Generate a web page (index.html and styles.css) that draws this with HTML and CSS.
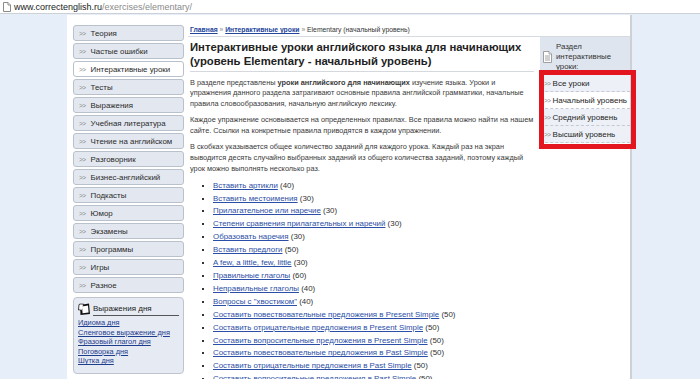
FILE: index.html
```html
<!DOCTYPE html>
<html lang="ru">
<head>
  <meta charset="UTF-8">
  <title>Elementary (начальный уровень)</title>
  <link rel="stylesheet" href="styles.css">
</head>
<body>
  <div class="addressbar">
    <svg class="page-icon" viewBox="0 0 8 10">
      <path d="M0.5 0.5h4.5l2.5 2.5v6.5h-7z"></path>
      <path d="M5 0.5v2.5h2.5"></path>
    </svg>
    <span class="host">www.correctenglish.ru</span><span class="path">/exercises/elementary/</span>
  </div>

  <div class="page">
    <div class="sidebar">
      <ul class="menu">
        <li><span class="arr">&gt;&gt;</span>Теория</li>
        <li><span class="arr">&gt;&gt;</span>Частые ошибки</li>
        <li class="active"><span class="arr">&gt;&gt;</span>Интерактивные уроки</li>
        <li><span class="arr">&gt;&gt;</span>Тесты</li>
        <li><span class="arr">&gt;&gt;</span>Выражения</li>
        <li><span class="arr">&gt;&gt;</span>Учебная литература</li>
        <li><span class="arr">&gt;&gt;</span>Чтение на английском</li>
        <li><span class="arr">&gt;&gt;</span>Разговорник</li>
        <li><span class="arr">&gt;&gt;</span>Бизнес-английский</li>
        <li><span class="arr">&gt;&gt;</span>Подкасты</li>
        <li><span class="arr">&gt;&gt;</span>Юмор</li>
        <li><span class="arr">&gt;&gt;</span>Экзамены</li>
        <li><span class="arr">&gt;&gt;</span>Программы</li>
        <li><span class="arr">&gt;&gt;</span>Игры</li>
        <li><span class="arr">&gt;&gt;</span>Разное</li>
      </ul>

      <div class="box">
        <div class="box-title">
          <svg class="pad-icon" viewBox="0 0 13 14">
            <path d="M2 3l9-1.5 1 10.5-9.5 1z" fill="#111"></path>
            <path d="M1 2.5c2-1 3 0 4.5-0.5l-1 6c-1.5 0.5-2.5-0.5-4 0z" fill="#fff" stroke="#111" stroke-width="0.8"></path>
            <path d="M4 4.5l6-1 0.6 7-6 0.8z" fill="#fff"></path>
          </svg>
          <span>Выражения дня</span>
        </div>
        <a href="#">Идиома дня</a>
        <a href="#">Сленговое выражение дня</a>
        <a href="#">Фразовый глагол дня</a>
        <a href="#">Поговорка дня</a>
        <a href="#">Шутка дня</a>
      </div>
      <div class="box"></div>
    </div>

    <div class="main">
      <div class="crumbs">
        <a href="#">Главная</a> <span class="sep">»</span> <a href="#">Интерактивные уроки</a> <span class="sep">»</span> Elementary (начальный уровень)
      </div>

      <div class="columns">
        <div class="content">
          <h1>Интерактивные уроки английского языка для начинающих (уровень Elementary - начальный уровень)</h1>
          <p>В разделе представлены <b>уроки английского для начинающих</b> изучение языка. Уроки и<br>
            упражнения данного раздела затрагивают основные правила английской грамматики, начальные<br>
            правила словообразования, начальную английскую лексику.</p>
          <p>Каждое упражнение основывается на определенных правилах. Все правила можно найти на нашем<br>
            сайте. Ссылки на конкретные правила приводятся в каждом упражнении.</p>
          <p>В скобках указывается общее количество заданий для каждого урока. Каждый раз на экран<br>
            выводится десять случайно выбранных заданий из общего количества заданий, поэтому каждый<br>
            урок можно выполнять несколько раз.</p>
          <ul class="lessons">
            <li><a href="#">Вставить артикли</a> (40)</li>
            <li><a href="#">Вставить местоимения</a> (30)</li>
            <li><a href="#">Прилагательное или наречие</a> (30)</li>
            <li><a href="#">Степени сравнения прилагательных и наречий</a> (30)</li>
            <li><a href="#">Образовать наречия</a> (30)</li>
            <li><a href="#">Вставить предлоги</a> (50)</li>
            <li><a href="#">A few, a little, few, little</a> (30)</li>
            <li><a href="#">Правильные глаголы</a> (60)</li>
            <li><a href="#">Неправильные глаголы</a> (40)</li>
            <li><a href="#">Вопросы с "хвостиком"</a> (40)</li>
            <li><a href="#">Составить повествовательные предложения в Present Simple</a> (50)</li>
            <li><a href="#">Составить отрицательные предложения в Present Simple</a> (50)</li>
            <li><a href="#">Составить вопросительные предложения в Present Simple</a> (50)</li>
            <li><a href="#">Составить повествовательные предложения в Past Simple</a> (50)</li>
            <li><a href="#">Составить отрицательные предложения в Past Simple</a> (50)</li>
            <li><a href="#">Составить вопросительные предложения в Past Simple</a> (50)</li>
          </ul>
        </div>

        <div class="aside">
          <div class="aside-head">
            <svg class="doc-icon" viewBox="0 0 9 12">
              <path d="M0.5 0.5h5.5l2.5 2.5v8.5h-8z"></path>
              <path d="M6 0.5v2.5h2.5"></path>
              <path d="M2 5h5M2 7h5M2 9h5"></path>
            </svg>
            <span>Раздел интерактивные уроки:</span>
          </div>
          <ul class="levels">
            <li><span class="arr">&gt;&gt;</span>Все уроки</li>
            <li class="active"><span class="arr">&gt;&gt;</span>Начальный уровень</li>
            <li><span class="arr">&gt;&gt;</span>Средний уровень</li>
            <li><span class="arr">&gt;&gt;</span>Высший уровень</li>
          </ul>
          <div class="mark"></div>
        </div>
      </div>
    </div>
  </div>
</body>
</html>
```

FILE: styles.css
```css
* {
  margin: 0;
  padding: 0;
  box-sizing: border-box;
}

html, body {
  height: 100%;
  overflow: hidden;
}

body {
  font-family: "Liberation Sans", Arial, sans-serif;
  background: #e6eff9;
  color: #333;
}

a {
  color: #2a4b9f;
}

/* browser address bar */
.addressbar {
  height: 14px;
  background: #fff;
  border-bottom: 1px solid #cdd1d5;
  display: flex;
  align-items: center;
  padding-left: 3px;
  font-size: 9px;
}

.page-icon {
  width: 8px;
  height: 10px;
  margin-right: 3px;
  fill: #fff;
  stroke: #8a8a8a;
  stroke-width: 1;
}

.host {
  color: #222;
}

.path {
  color: #8a8a8a;
}

/* page frame */
.page {
  display: flex;
  width: 565px;
  margin: 1px 0 0 67px;
  min-height: 420px;
  background: #fff;
  border-right: 2px solid #cdd1d6;
}

.sidebar {
  width: 121px;
  flex-shrink: 0;
  padding: 10px 0 0 6px;
}

.menu {
  list-style: none;
  width: 111px;
}

.menu li {
  height: 16px;
  margin-bottom: 2px;
  border: 1px solid #b9c1cc;
  border-radius: 3px;
  background: #e3e8f0;
  display: flex;
  align-items: center;
  padding-left: 5px;
  font-size: 7.9px;
  color: #2a2a2a;
}

.menu li.active {
  background: #fff;
}

.arr {
  font-size: 6.5px;
  color: #888;
  letter-spacing: -0.5px;
  margin-right: 5px;
}

.box {
  width: 111px;
  margin-top: 4px;
  border: 1px solid #bec5cf;
  border-radius: 4px;
  background: #e6eaf2;
  padding: 4px 4px 7px 4px;
  display: flex;
  flex-direction: column;
  font-size: 7.4px;
  line-height: 9.6px;
}

.box-title {
  display: flex;
  align-items: flex-end;
  gap: 2px;
  margin-bottom: 2px;
}

.box-title span {
  flex: 1;
  font-size: 8px;
  color: #222;
  border-bottom: 1px solid #555;
  padding-bottom: 1px;
}

.pad-icon {
  width: 13px;
  height: 14px;
}

.box a {
  color: #1d3d8f;
}

.box + .box {
  margin-top: 5px;
  height: 40px;
}

/* main area */
.main {
  flex: 1;
  display: flex;
  flex-direction: column;
}

.crumbs {
  height: 22px;
  padding: 10px 0 0 2px;
  font-size: 6.8px;
  line-height: 10px;
  color: #333;
  border-bottom: 1px solid #d6dbe1;
}

.crumbs a {
  font-weight: bold;
  color: #24459a;
}

.sep {
  color: #888;
}

.columns {
  display: flex;
}

.content {
  width: 352px;
  padding: 0 2px 0 2px;
}

.content h1 {
  margin-top: 3px;
  margin-right: 4px;
  font-size: 11.3px;
  line-height: 14px;
  color: #222;
  padding-bottom: 3px;
  border-bottom: 1px solid #d5d9de;
}

.content p {
  margin-top: 5.5px;
  font-size: 7.35px;
  line-height: 10.8px;
  color: #3a3a3a;
  white-space: nowrap;
}

.lessons {
  list-style: square;
  margin-top: 4.8px;
  padding-left: 23px;
  font-size: 7.9px;
  line-height: 12.9px;
  color: #333;
}

.lessons a {
  color: #2b4ea6;
}

/* right column */
.aside {
  position: relative;
  width: 90px;
  align-self: flex-start;
}

.aside-head {
  display: flex;
  align-items: center;
  gap: 4px;
  padding: 5px 0 3px 3px;
  background: #dee5ee;
  font-size: 7.8px;
  line-height: 10px;
  color: #333;
}

.doc-icon {
  width: 9px;
  height: 12px;
  flex-shrink: 0;
  fill: #fff;
  stroke: #8a8a8a;
  stroke-width: 0.8;
}

.levels {
  list-style: none;
}

.levels li {
  height: 17px;
  display: flex;
  align-items: center;
  padding-left: 4px;
  background: #edf1f7;
  border-bottom: 1px dashed #c3cad4;
  font-size: 8px;
  white-space: nowrap;
  color: #1e1e1e;
}

.levels li.active {
  background: #fff;
}

.levels .arr {
  margin-right: 2px;
}

/* red annotation frame drawn over the screenshot */
.mark {
  position: absolute;
  left: -1px;
  top: 33px;
  width: 97px;
  height: 79px;
  border: 5px solid #e3161f;
}
```
